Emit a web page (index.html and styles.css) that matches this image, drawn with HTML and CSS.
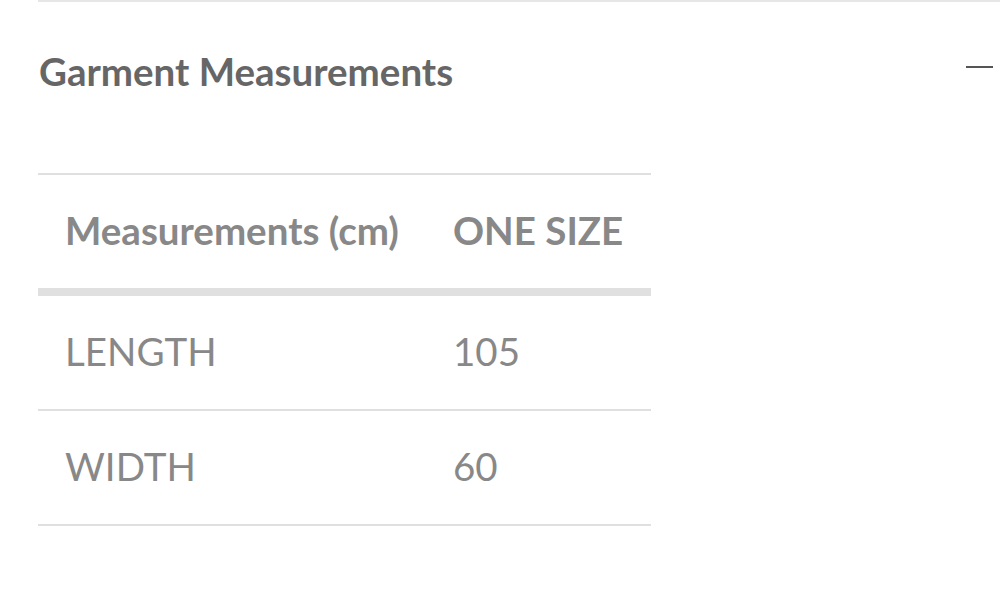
FILE: index.html
```html
<!DOCTYPE html>
<html>
<head>
<meta charset="utf-8">
<link rel="stylesheet" href="styles.css">
</head>
<body>
<section class="accordion">
  <div class="acc-head">
    <h2 class="acc-title">Garment Measurements</h2>
    <span class="acc-toggle"></span>
  </div>
  <table class="size-table">
    <thead>
      <tr><th>Measurements (cm)</th><th>ONE SIZE</th></tr>
    </thead>
    <tbody>
      <tr><td>LENGTH</td><td>105</td></tr>
      <tr><td>WIDTH</td><td>60</td></tr>
    </tbody>
  </table>
</section>
</body>
</html>
```
FILE: styles.css
```css
html, body { margin: 0; padding: 0; background: #fff; }
body { font-family: Lato, "Open Sans", sans-serif; }
.accordion {
  margin-left: 38px;
  border-top: 2px solid #e6e6e6;
}
.acc-head {
  display: flex;
  align-items: center;
  justify-content: space-between;
  height: 142px;
}
.acc-title {
  margin: 0;
  margin-left: 1px;
  font-size: 38.5px;
  font-weight: 700;
  color: #666;
  position: relative;
  top: -2px;
}
.acc-toggle {
  display: block;
  width: 27px;
  height: 2px;
  background: #555;
  margin-right: 7px;
  position: relative;
  top: -6px;
}
.size-table {
  margin-top: 29px;
  width: 613px;
  border-collapse: collapse;
  font-size: 38.5px;
  color: #888;
}
.size-table th, .size-table td {
  text-align: left;
  vertical-align: middle;
  padding: 0 0 4px 27px;
  height: 109px;
}
.size-table th { font-weight: 700; }
.size-table td { font-weight: 400; }
.size-table th:first-child, .size-table td:first-child { width: 361px; }
.size-table thead tr { border-top: 2px solid #e0e0e0; border-bottom: 8px solid #e0e0e0; }
.size-table tbody tr { border-bottom: 2px solid #e0e0e0; }
```
